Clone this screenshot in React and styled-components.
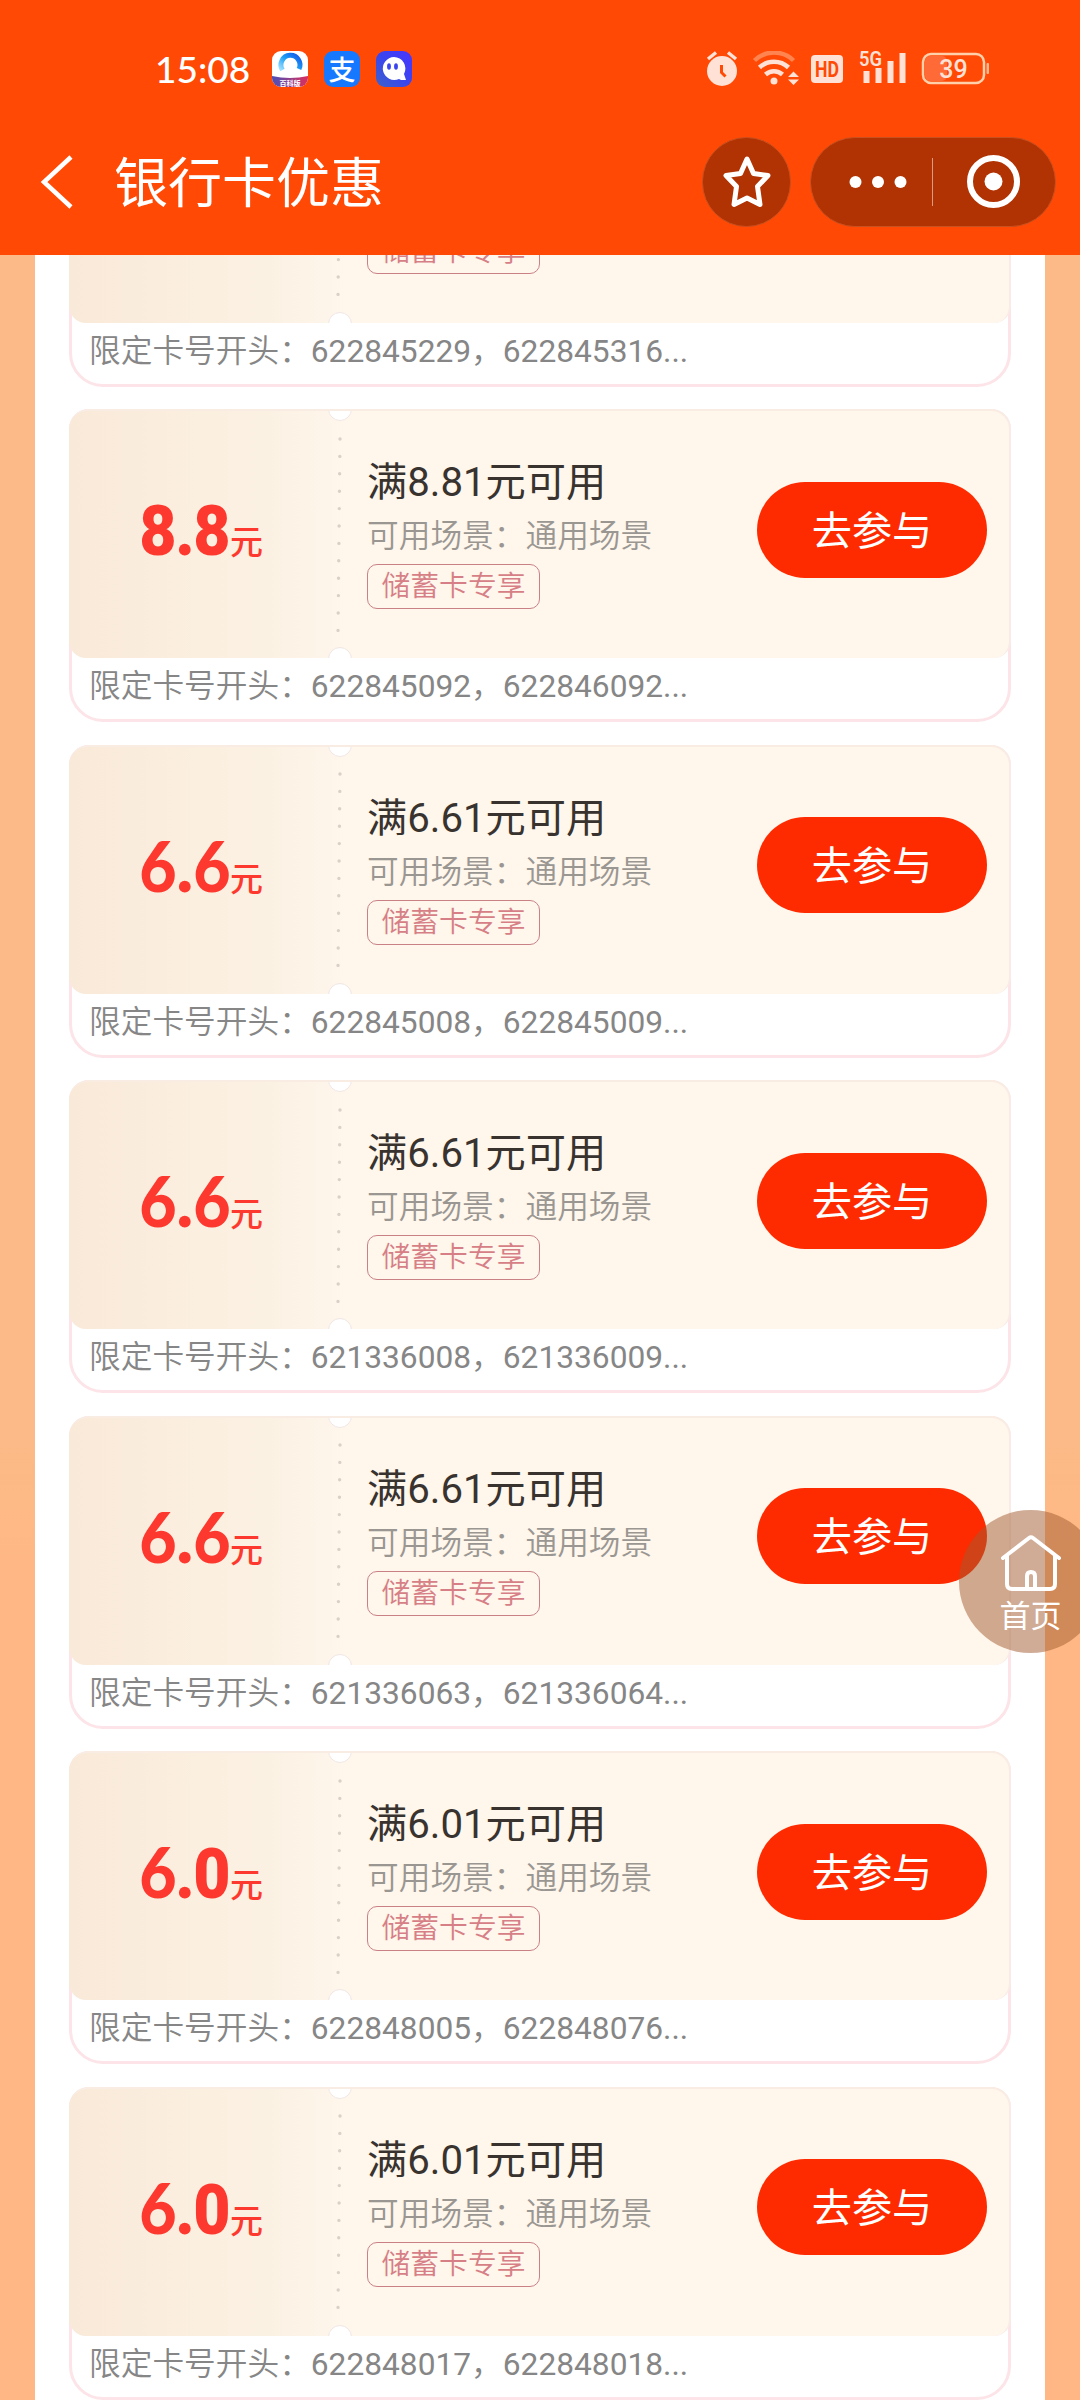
import React from "react";
import styled, { createGlobalStyle } from "styled-components";

const GlobalStyle = createGlobalStyle`
    * {
        box-sizing: border-box;
    }
    body {
        margin: 0;
        font-family: Roboto, "Noto Sans CJK SC", sans-serif;
        background: #fbba87;
    }
`;

// page
const Page = styled.div`
    width: 1080px;
    height: 2400px;
    position: relative;
    display: flex;
    flex-direction: column;
    overflow: hidden;
    background: linear-gradient(#fbba87 60%, #ffb885 65%);
`;

const Header = styled.header`
    height: 255px;
    flex: none;
    background: #ff4905;
    color: #fff;
`;

// status bar
const StatusBar = styled.div`
    height: 120px;
    padding: 18px 90px 0 155px;
    display: flex;
    align-items: center;
    justify-content: space-between;
`;

const StatusLeft = styled.div`
    display: flex;
    align-items: center;
    gap: 15px;
`;

const Clock = styled.div`
    width: 102px;
    font-family: Lato, sans-serif;
    font-size: 37px;
    font-weight: 500;
    line-height: 40px;
    white-space: nowrap;
`;

// nav bar
const NavBar = styled.div`
    height: 124px;
    padding: 0 24px 0 38px;
    display: flex;
    align-items: center;
`;

const Title = styled.h1`
    flex: 1;
    margin: 0 0 0 40px;
    padding-top: 5px;
    font-size: 54px;
    font-weight: 400;
    line-height: 70px;
`;

const RoundButton = styled.div`
    width: ${(p) => p.$width}px;
    height: 90px;
    margin-left: ${(p) => p.$gap || 0}px;
    border-radius: 45px;
    border: 1px solid #c9501f;
    background: #b13203;
    display: flex;
    align-items: center;
    justify-content: center;
`;

// white panel with the coupon list
const Content = styled.main`
    flex: 1;
    margin: 0 35px;
    overflow: hidden;
    background: #fff;
`;

const CouponList = styled.div`
    margin-top: -181.4px;
    padding: 0 34px;
    display: flex;
    flex-direction: column;
    gap: 22.5px;
`;

const Coupon = styled.div`
    height: 313px;
    flex: none;
    border: 3px solid #fce4e8;
    border-radius: 20px 20px 34px 34px;
`;

const Ticket = styled.div`
    position: relative;
    height: 249px;
    margin: -3px -3px 0;
    padding: 0 22px 4px 0;
    display: flex;
    align-items: center;
    overflow: hidden;
    border-radius: 20px 20px 17px 17px;
    border-top: 2px solid #f9ece2;
    border-right: 2px solid #f9ece6;
    background: linear-gradient(90deg, #f9e9d9 0, #fbefdf 130px, #fbf1e3 200px, #fff6ec 275px);
`;

// half circle cut out of the ticket edge
const Notch = styled.span`
    position: absolute;
    left: 259px;
    ${(p) => (p.$bottom ? "bottom: -13px;" : "top: -14px;")}
    width: 24px;
    height: 24px;
    border-radius: 50%;
    border: 1px solid #f0e6e4;
    background: #fff;
`;

const Price = styled.div`
    width: 264px;
    padding: 0 0 4px 71px;
    display: flex;
    align-items: baseline;
    color: #fd392f;
`;

const Digit = styled.span`
    width: ${(p) => (p.$char === "." ? 18 : 36)}px;
    display: flex;
    justify-content: center;
    font-family: ${(p) => (p.$char === "6" ? "Lato" : "Roboto")}, sans-serif;
    font-size: 70px;
    font-weight: 900;
    line-height: 80px;
    transform: scaleX(0.92);
`;

const Unit = styled.span`
    position: relative;
    top: -1px;
    font-size: 33px;
    font-weight: 500;
`;

const Perforation = styled.svg`
    width: 10px;
    height: 206px;
    flex: none;
    margin-top: 4px;
`;

const Info = styled.div`
    flex: 1;
    padding-left: 24px;
    display: flex;
    flex-direction: column;
    align-items: flex-start;
`;

const Condition = styled.div`
    margin-top: -2px;
    font-size: 40.2px;
    line-height: 58px;
    color: #38332f;
`;

const Scene = styled.div`
    font-family: Roboto, "Noto Sans CJK SC DemiLight", "Noto Sans CJK SC", sans-serif;
    font-size: 31.7px;
    font-weight: 350;
    line-height: 50px;
    color: #9a9692;
`;

const Tag = styled.div`
    height: 45px;
    margin-top: 2px;
    padding: 0 13.5px;
    border: 1px solid #c98186;
    border-radius: 10px;
    font-family: Roboto, "Noto Sans CJK SC DemiLight", "Noto Sans CJK SC", sans-serif;
    font-size: 28.8px;
    font-weight: 350;
    line-height: 42px;
    color: #d67f86;
`;

const JoinButton = styled.button`
    width: 230px;
    height: 96px;
    margin-bottom: 6px;
    padding: 0 0 5px;
    border: 0;
    border-radius: 48px;
    background: #ff2b00;
    color: #fff;
    font-family: inherit;
    font-size: 40.2px;
    font-weight: 400;
`;

const CardPrefix = styled.div`
    padding-left: 17px;
    font-family: Roboto, "Noto Sans CJK SC DemiLight", "Noto Sans CJK SC", sans-serif;
    font-size: 31.7px;
    line-height: 58px;
    color: #868686;
    white-space: nowrap;
`;

// floating shortcut
const HomeButton = styled.div`
    position: absolute;
    left: 959px;
    top: 1510px;
    width: 143px;
    height: 143px;
    padding-top: 24px;
    border-radius: 50%;
    background: rgba(162, 90, 46, 0.5);
    color: #fff;
    display: flex;
    flex-direction: column;
    align-items: center;
    gap: 6px;
    font-size: 31px;
    line-height: 38px;
`;

const coupons = [
    { amount: "8.8", min: "8.81", cards: "622845229，622845316..." },
    { amount: "8.8", min: "8.81", cards: "622845092，622846092..." },
    { amount: "6.6", min: "6.61", cards: "622845008，622845009..." },
    { amount: "6.6", min: "6.61", cards: "621336008，621336009..." },
    { amount: "6.6", min: "6.61", cards: "621336063，621336064..." },
    { amount: "6.0", min: "6.01", cards: "622848005，622848076..." },
    { amount: "6.0", min: "6.01", cards: "622848017，622848018..." },
];

function AppIcons() {
    return (
        <svg width="142" height="38" viewBox="0 0 142 38">
            <defs>
                <linearGradient id="ring" x1="0" y1="1" x2="1" y2="0">
                    <stop offset="0" stopColor="#9fe0ff" />
                    <stop offset="0.5" stopColor="#1fa0f5" />
                    <stop offset="1" stopColor="#1456e8" />
                </linearGradient>
                <linearGradient id="band">
                    <stop offset="0" stopColor="#4a50b8" />
                    <stop offset="1" stopColor="#dd2f5c" />
                </linearGradient>
                <linearGradient id="ghost" x1="0" y1="1" x2="1" y2="0">
                    <stop offset="0" stopColor="#3d62c8" />
                    <stop offset="0.5" stopColor="#3a45ee" />
                    <stop offset="1" stopColor="#4a35ff" />
                </linearGradient>
                <clipPath id="tile">
                    <rect x="0" y="1" width="36" height="36" rx="9" />
                </clipPath>
            </defs>
            <g clipPath="url(#tile)">
                <rect y="1" width="36" height="36" fill="#fff" />
                <path d="M10.500 20a9.500 9.500 0 1 1 16.500-1" fill="none" stroke="url(#ring)" strokeWidth="5" />
                <path d="M0 26q18 4 36 0v12H0z" fill="url(#band)" />
                <text x="18" y="35.500" textAnchor="middle" fontSize="7" fontWeight="700" fill="#fff">百科版</text>
            </g>
            <rect x="52" y="1" width="36" height="36" rx="9" fill="#1678ff" />
            <text x="70" y="29.500" textAnchor="middle" fontSize="27" fontWeight="500" fill="#fff">支</text>
            <rect x="104" y="1" width="36" height="36" rx="9" fill="url(#ghost)" />
            <path d="M122 7a11.500 11.500 0 0 1 10 17l2 6h-5l-2-1A11.500 11.500 0 1 1 122 7z" fill="#fff" />
            <ellipse cx="117" cy="16.500" rx="1.900" ry="3.200" fill="#3a45ee" />
            <ellipse cx="124" cy="16.500" rx="1.900" ry="3.200" fill="#3a45ee" />
        </svg>
    );
}

function SystemIcons() {
    return (
        <svg width="284" height="36" viewBox="0 0 284 36" fill="#ffe1d5">
            {/* alarm */}
            <circle cx="16" cy="20" r="15" />
            <path d="M2 8l8-6.500M30 8l-8-6.500" stroke="#ffe1d5" strokeWidth="3.500" />
            <path d="M15.500 14v7.500l4 4" stroke="#ff4905" strokeWidth="3" fill="none" />
            {/* wifi */}
            <g fill="none" strokeWidth="4.500">
                <path d="M48.500 9.500a28 28 0 0 1 39 0" stroke="#ff8450" />
                <path d="M53.500 16.500a21 21 0 0 1 29 0" stroke="#ffe1d5" />
                <path d="M59.500 23.500a12.500 12.500 0 0 1 17 0" stroke="#ffe1d5" />
            </g>
            <circle cx="68" cy="30" r="3.500" />
            <path d="M82 26h11l-5.500-5.500zM82 28.500h11l-5.500 5.500z" />
            {/* hd */}
            <rect x="105" y="4" width="32" height="28" rx="4" />
            <text x="121" y="26" textAnchor="middle" fontSize="22" fontWeight="700" fill="#ff4905" textLength="24" lengthAdjust="spacingAndGlyphs">HD</text>
            {/* signal */}
            <text x="153" y="14.500" fontSize="20" fontWeight="600" textLength="23" lengthAdjust="spacingAndGlyphs">5G</text>
            <rect x="157.500" y="20" width="6" height="12" />
            <rect x="169.500" y="17" width="6" height="15" />
            <rect x="181.500" y="10" width="6" height="22" />
            <rect x="193.500" y="2" width="6" height="30" />
            {/* battery */}
            <rect x="219" y="5" width="22" height="25" rx="5" fill="#ff6a36" />
            <rect x="217" y="3" width="61" height="29" rx="8" fill="none" stroke="#ffd0aa" strokeWidth="2.500" />
            <rect x="280.500" y="12" width="2.500" height="11" rx="1" fill="#ffb990" />
            <text x="247.500" y="26.500" textAnchor="middle" fontSize="25" fontWeight="500">39</text>
        </svg>
    );
}

function CouponCard({ coupon }) {
    return (
        <Coupon>
            <Ticket>
                <Notch />
                <Notch $bottom />
                <Price>
                    {coupon.amount.split("").map((char, i) => (
                        <Digit key={i} $char={char}>{char}</Digit>
                    ))}
                    <Unit>元</Unit>
                </Price>
                <Perforation viewBox="0 0 10 206">
                    <path d="M7 7L5 200" stroke="#d9d1c8" strokeWidth="3.400" strokeLinecap="round" strokeDasharray="0 17.400" />
                </Perforation>
                <Info>
                    <Condition>满{coupon.min}元可用</Condition>
                    <Scene>可用场景：通用场景</Scene>
                    <Tag>储蓄卡专享</Tag>
                </Info>
                <JoinButton>去参与</JoinButton>
            </Ticket>
            <CardPrefix>限定卡号开头：{coupon.cards}</CardPrefix>
        </Coupon>
    );
}

function App() {
    return (
        <Page>
            <GlobalStyle />
            <Header>
                <StatusBar>
                    <StatusLeft>
                        <Clock>15:08</Clock>
                        <AppIcons />
                    </StatusLeft>
                    <SystemIcons />
                </StatusBar>
                <NavBar>
                    <svg width="36" height="54" viewBox="0 0 36 54" fill="none" stroke="#fff" strokeWidth="4.500">
                        <path d="M33 2L6 27l27 25" />
                    </svg>
                    <Title>银行卡优惠</Title>
                    <RoundButton $width={89}>
                        <svg width="52" height="54" viewBox="0 0 52 54" fill="none" stroke="#fff" strokeWidth="5" strokeLinejoin="round">
                            <path d="M26 4l6.500 14.500 14.500 2-10.500 11 2.500 18L26 43l-13 6.500 2.500-18L5 20.500l14.500-2z" />
                        </svg>
                    </RoundButton>
                    <RoundButton $width={246} $gap={19}>
                        <svg width="244" height="88" viewBox="0 0 244 88" fill="#fff">
                            <circle cx="44.500" cy="44" r="6" />
                            <circle cx="67" cy="44" r="6" />
                            <circle cx="89.500" cy="44" r="6" />
                            <rect x="121" y="20" width="1" height="48" fill="#dc9a80" />
                            <circle cx="182.500" cy="43.500" r="23.500" fill="none" stroke="#fff" strokeWidth="6" />
                            <circle cx="182.500" cy="43.500" r="9" />
                        </svg>
                    </RoundButton>
                </NavBar>
            </Header>
            <Content>
                <CouponList>
                    {coupons.map((coupon) => (
                        <CouponCard key={coupon.cards} coupon={coupon} />
                    ))}
                </CouponList>
            </Content>
            <HomeButton>
                <svg width="62" height="58" viewBox="0 0 62 58" fill="none" stroke="#fff" strokeWidth="4" strokeLinecap="round" strokeLinejoin="round">
                    <path d="M3 24L29 4q2-1.500 4 0l26 20M7 22v28q0 5 5 5h38q5 0 5-5V22M27 54V42q0-4 4-4t4 4v12" />
                </svg>
                首页
            </HomeButton>
        </Page>
    );
}

export default App;
